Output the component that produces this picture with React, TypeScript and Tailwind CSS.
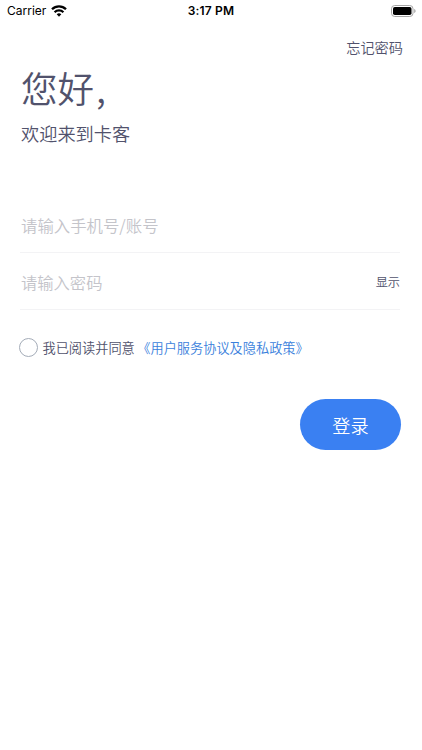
import { useState } from 'react';

function StatusBar() {
    return (
        <div className="grid h-[22px] grid-cols-3 items-center pl-[7px] pr-[6px] font-[Inter,sans-serif] font-normal text-black">
            <div className="flex items-center gap-[5px]">
                <span className="text-[12px] leading-[22px]">Carrier</span>
                <svg className="-mt-px" width="16" height="12" viewBox="0 0 16 12" fill="none" stroke="#000" strokeWidth="2.3">
                    <path d="M1 4.3a10 10 0 0 1 14 0" />
                    <path d="M3.6 7.2a6.3 6.3 0 0 1 8.8 0" />
                    <path d="M8 11.7 5.7 9.3a3.3 3.3 0 0 1 4.6 0z" fill="#000" stroke="none" />
                </svg>
            </div>
            <span className="-ml-px text-center text-[12px] font-semibold leading-[22px] tracking-[0.2px]">3:17 PM</span>
            <svg className="-mt-px justify-self-end" width="25" height="12" viewBox="0 0 25 12">
                <rect x="0.5" y="0.5" width="21.5" height="11" rx="3.2" fill="none" stroke="#a6a6a6" />
                <rect x="2" y="2" width="18.5" height="8" rx="1.8" fill="#000" />
                <path d="M23.2 4v4c.8-.3 1.4-1.1 1.4-2s-.6-1.7-1.4-2z" fill="#a6a6a6" />
            </svg>
        </div>
    );
}

export default function App() {
    const [account, setAccount] = useState('');
    const [password, setPassword] = useState('');
    const [visible, setVisible] = useState(false);
    const [agreed, setAgreed] = useState(false);

    return (
        <div className="h-[750px] w-[422px] overflow-hidden bg-white font-['Noto_Sans_CJK_SC',sans-serif] font-[350] text-[#51526c]">
            <StatusBar />

            <div className="flex justify-end pr-[19px] pt-[14px]">
                <button className="text-[14.2px] leading-[22px]">忘记密码</button>
            </div>

            <div className="pl-[21px]">
                <h1 className="mt-[6px] text-[36.5px] font-[350] leading-[48px]">您好<span className="ml-[2px]">,</span></h1>
                <p className="mt-[8px] text-[18.2px] leading-[26px]">欢迎来到卡客</p>
            </div>

            <form className="ml-[20px] mr-[22px] mt-[50px]" onSubmit={e => e.preventDefault()}>
                <div className="flex h-[57px] items-center border-b border-[#f3f3f5] pl-px pt-[2px]">
                    <input
                        className="w-full text-[16.4px] leading-[24px] outline-none placeholder:text-[#c4c4ca]"
                        placeholder="请输入手机号/账号"
                        value={account}
                        onChange={e => setAccount(e.target.value)}
                    />
                </div>
                <div className="flex h-[57px] items-center border-b border-[#f3f3f5] pl-px pt-[2px]">
                    <input
                        className="min-w-0 flex-1 text-[16.3px] leading-[24px] outline-none placeholder:text-[#c4c4ca]"
                        type={visible ? 'text' : 'password'}
                        placeholder="请输入密码"
                        value={password}
                        onChange={e => setPassword(e.target.value)}
                    />
                    <button type="button" className="text-[12.2px] leading-[20px]" onClick={() => setVisible(!visible)}>
                        {visible ? '隐藏' : '显示'}
                    </button>
                </div>

                <div className="-ml-px mt-[27px] flex items-center text-[13.2px] leading-[20px]">
                    <button
                        type="button"
                        aria-label="同意协议"
                        className={`mr-[4.5px] size-[19px] rounded-full border ${agreed ? 'border-[#3a80f2] bg-[#3a80f2]' : 'border-[#a4acb8]'}`}
                        onClick={() => setAgreed(!agreed)}
                    />
                    <span className="pt-px">我已阅读并同意</span>
                    <a href="#" className="ml-[2.5px] pt-px text-[#3b7fdc]">《用户服务协议及隐私政策》</a>
                </div>

                <div className="mt-[41px] flex justify-end">
                    <button className="-mr-px h-[51px] w-[101px] rounded-full bg-[#3a80f2] pt-[2px] text-[18.2px] text-white">登录</button>
                </div>
            </form>
        </div>
    );
}
